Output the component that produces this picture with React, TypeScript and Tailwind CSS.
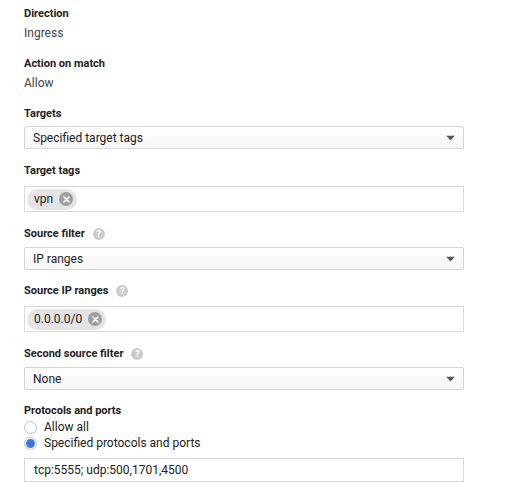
import React from "react";

const Help = () => (
  <span className="ml-[8px] inline-flex h-[12px] w-[12px] items-center justify-center rounded-full bg-[#cccccc] text-[9px] font-bold leading-none text-white">
    ?
  </span>
);

const Label = ({ children, help, className = "" }: { children: React.ReactNode; help?: boolean; className?: string }) => (
  <div className={`flex h-[16px] items-center text-[11px] font-bold leading-[16px] text-[#212121] ${className}`}>
    {children}
    {help && <Help />}
  </div>
);

const Arrow = () => (
  <svg width="9" height="5" viewBox="0 0 9 5" className="absolute right-[8px] top-1/2 -translate-y-1/2">
    <path d="M0 0h9L4.5 5z" fill="#555" />
  </svg>
);

const Select = ({ value, className = "" }: { value: string; className?: string }) => (
  <div
    className={`relative flex h-[23px] w-[440px] items-center rounded-[2px] border border-[#d4d4d4] bg-gradient-to-b from-white to-[#f6f6f6] pl-[8px] text-[12px] text-[#212121] ${className}`}
  >
    {value}
    <Arrow />
  </div>
);

const Chip = ({ text }: { text: string }) => (
  <span className="inline-flex h-[21px] items-center rounded-full bg-[#e4e4e4] pl-[7px] pr-[4px] text-[12px] text-[#212121]">
    {text}
    <span className="ml-[6px] inline-flex h-[14px] w-[14px] items-center justify-center rounded-full bg-[#9e9e9e]">
      <svg width="7" height="7" viewBox="0 0 7 7">
        <path d="M1 1l5 5M6 1L1 6" stroke="#fff" strokeWidth="1.7" strokeLinecap="round" />
      </svg>
    </span>
  </span>
);

const TagBox = ({ text, className = "" }: { text: string; className?: string }) => (
  <div className={`flex h-[26px] w-[440px] items-center border border-[#d9d9d9] bg-white pl-[2px] ${className}`}>
    <Chip text={text} />
  </div>
);

const Radio = ({ checked, label }: { checked?: boolean; label: string }) => (
  <div className="flex h-[16px] items-center text-[12px] leading-[16px] text-[#212121]">
    <span className="inline-flex h-[13px] w-[13px] items-center justify-center rounded-full border border-[#c2c2c2] bg-white">
      {checked && <span className="h-[9px] w-[9px] rounded-full bg-[#3b78e7]" />}
    </span>
    <span className="ml-[7px]">{label}</span>
  </div>
);

export default function App() {
  return (
    <div
      className="h-[492px] w-[511px] bg-white pl-[24px] pt-[6px]"
      style={{ fontFamily: "Roboto, 'Liberation Sans', sans-serif" }}
    >
      <Label>Direction</Label>
      <div className="mt-[3px] text-[12px] leading-[16px] text-[#444]">Ingress</div>
      <Label className="mt-[15px]">Action on match</Label>
      <div className="mt-[3px] text-[12px] leading-[16px] text-[#444]">Allow</div>
      <Label className="mt-[15px]">Targets</Label>
      <Select className="mt-[4px]" value="Specified target tags" />
      <Label className="mt-[14px]">Target tags</Label>
      <TagBox className="mt-[7px]" text="vpn" />
      <Label className="mt-[14px]" help>
        Source filter
      </Label>
      <Select className="mt-[5px]" value="IP ranges" />
      <Label className="mt-[13px]" help>
        Source IP ranges
      </Label>
      <TagBox className="mt-[7px]" text="0.0.0.0/0" />
      <Label className="mt-[14px]" help>
        Second source filter
      </Label>
      <Select className="mt-[5px]" value="None" />
      <Label className="mt-[13px]">Protocols and ports</Label>
      <Radio label="Allow all" />
      <Radio checked label="Specified protocols and ports" />
      <div className="mt-[7px] flex h-[24px] w-[440px] items-center border border-[#d9d9d9] bg-white pl-[9px] text-[12px] text-[#212121]">
        tcp:5555; udp:500,1701,4500
      </div>
    </div>
  );
}
